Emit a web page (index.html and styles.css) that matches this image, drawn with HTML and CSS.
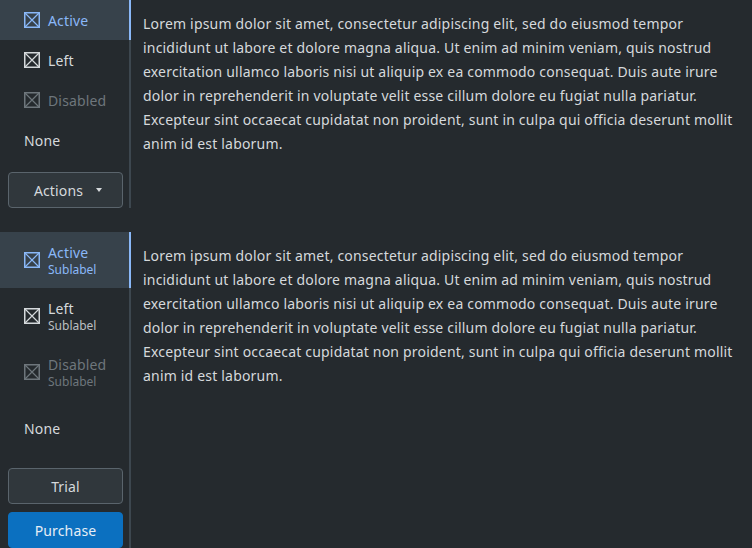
FILE: index.html
```html
<!DOCTYPE html>
<html>
<head>
<meta charset="utf-8">
<link rel="stylesheet" href="styles.css">
</head>
<body>
<svg width="0" height="0" class="defs">
  <symbol id="ico" viewBox="0 0 16 16">
    <rect x="0.75" y="0.75" width="14.5" height="14.5" fill="none" stroke="currentColor" stroke-width="1.5"/>
    <path d="M1 1L15 15M15 1L1 15" stroke="currentColor" stroke-width="1.2" fill="none"/>
  </symbol>
</svg>
<div class="section">
  <div class="sidebar">
    <div class="tab active"><svg class="icon"><use href="#ico"/></svg><span class="label">Active</span></div>
    <div class="tab"><svg class="icon"><use href="#ico"/></svg><span class="label">Left</span></div>
    <div class="tab disabled"><svg class="icon"><use href="#ico"/></svg><span class="label">Disabled</span></div>
    <div class="tab"><span class="label">None</span></div>
    <div class="actions">
      <button class="btn menu">Actions <span class="caret"></span></button>
    </div>
  </div>
  <div class="content">
    <p>Lorem ipsum dolor sit amet, consectetur adipiscing elit, sed do eiusmod tempor incididunt ut labore et dolore magna aliqua. Ut enim ad minim veniam, quis nostrud exercitation ullamco laboris nisi ut aliquip ex ea commodo consequat. Duis aute irure dolor in reprehenderit in voluptate velit esse cillum dolore eu fugiat nulla pariatur. Excepteur sint occaecat cupidatat non proident, sunt in culpa qui officia deserunt mollit anim id est laborum.</p>
  </div>
</div>
<div class="section second">
  <div class="sidebar">
    <div class="tab tall active"><svg class="icon"><use href="#ico"/></svg><span class="text"><span class="label">Active</span><span class="sub">Sublabel</span></span></div>
    <div class="tab tall"><svg class="icon"><use href="#ico"/></svg><span class="text"><span class="label">Left</span><span class="sub">Sublabel</span></span></div>
    <div class="tab tall disabled"><svg class="icon"><use href="#ico"/></svg><span class="text"><span class="label">Disabled</span><span class="sub">Sublabel</span></span></div>
    <div class="tab tall"><span class="label">None</span></div>
    <div class="actions stack">
      <button class="btn">Trial</button>
      <button class="btn primary">Purchase</button>
    </div>
  </div>
  <div class="content">
    <p>Lorem ipsum dolor sit amet, consectetur adipiscing elit, sed do eiusmod tempor incididunt ut labore et dolore magna aliqua. Ut enim ad minim veniam, quis nostrud exercitation ullamco laboris nisi ut aliquip ex ea commodo consequat. Duis aute irure dolor in reprehenderit in voluptate velit esse cillum dolore eu fugiat nulla pariatur. Excepteur sint occaecat cupidatat non proident, sunt in culpa qui officia deserunt mollit anim id est laborum.</p>
  </div>
</div>
</body>
</html>
```
FILE: styles.css
```css
html, body {
  margin: 0;
  padding: 0;
  background: #252a2e;
  height: 100%;
  overflow: hidden;
}
body {
  font-family: "Noto Sans", "Open Sans", sans-serif;
  font-size: 14px;
  color: #d5d9dc;
}
.defs { position: absolute; }
.section {
  display: flex;
}
.second {
  margin-top: 24px;
}
.sidebar {
  width: 129px;
  border-right: 2px solid #3d474f;
  flex: none;
}
.tab {
  height: 40px;
  display: flex;
  align-items: center;
  padding-left: 24px;
  color: #d5d9dc;
  margin-right: -2px;
  border-right: 2px solid transparent;
}
.tab.tall { height: 56px; }
.tab.active {
  background: #37424b;
  color: #8ab8f8;
  border-right-color: #8ab8f8;
}
.tab.disabled { color: #6e767c; }
.icon {
  width: 16px;
  height: 16px;
  margin-right: 8px;
  flex: none;
}
.label { line-height: 18px; padding-top: 1px; letter-spacing: 0.15px; }
.text {
  display: flex;
  flex-direction: column;
}
.sub {
  font-size: 12px;
  line-height: 16px;
  opacity: 0.85;
}
.active .sub, .disabled .sub { opacity: 1; }
.actions {
  padding: 12px 6px 0 8px;
}
.stack {
  display: flex;
  flex-direction: column;
  gap: 8px;
}
.btn {
  width: 115px;
  height: 36px;
  box-sizing: border-box;
  border: 1px solid #5a646c;
  border-radius: 4px;
  background: #30373c;
  color: #d5d9dc;
  font-family: inherit;
  font-size: 14px;
  letter-spacing: 0.15px;
  display: flex;
  align-items: center;
  justify-content: center;
  padding: 0;
}
.btn.menu {
  padding-left: 5px;
}
.btn.primary {
  background: #0b70c0;
  border-color: #0b70c0;
  color: #e6eef6;
}
.caret {
  width: 0;
  height: 0;
  border-left: 3px solid transparent;
  border-right: 3px solid transparent;
  border-top: 4px solid #d5d9dc;
  margin-left: 13px;
}
.content {
  flex: 1;
  padding: 0 12px;
}
.content p {
  margin: 12px 0 0;
  line-height: 24px;
  font-size: 14px;
  letter-spacing: 0.19px;
}
```
